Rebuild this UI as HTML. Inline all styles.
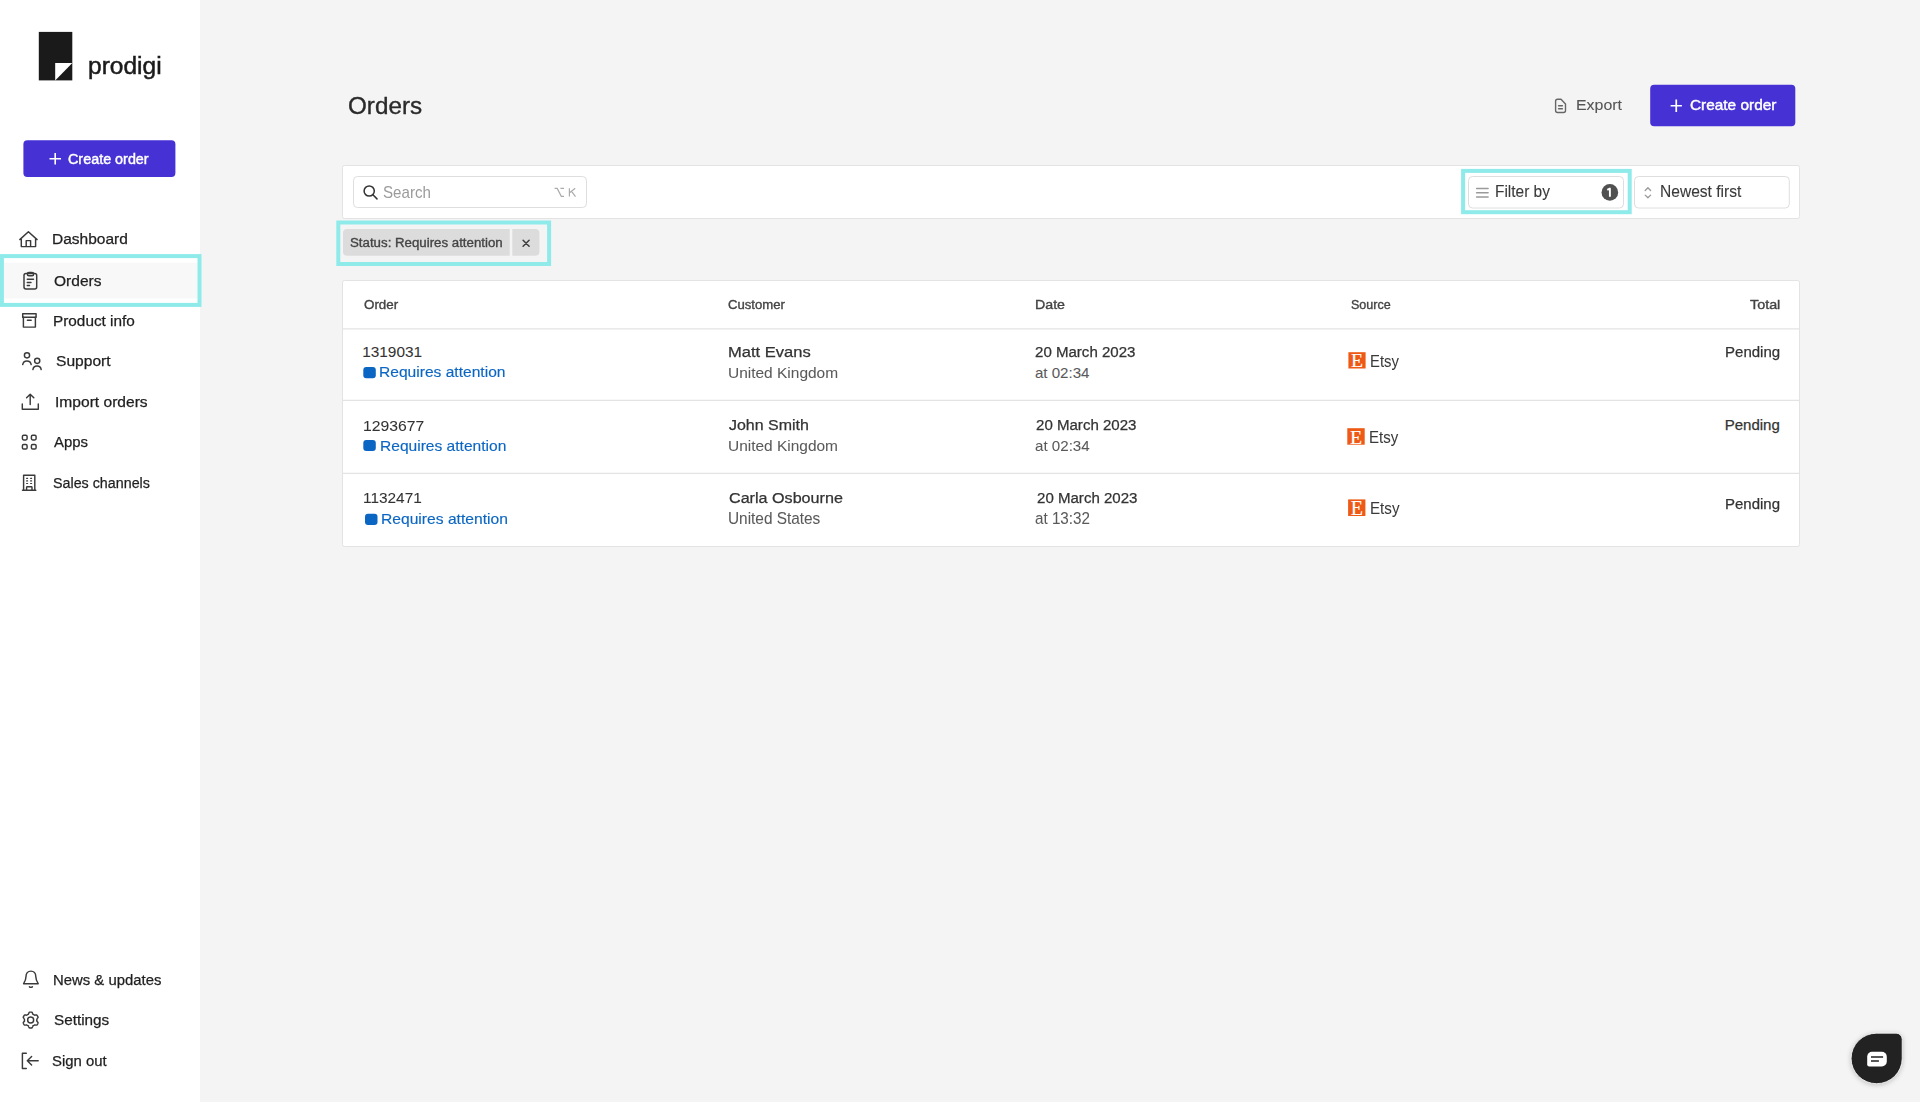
<!DOCTYPE html>
<html><head><meta charset="utf-8"><title>Orders</title>
<style>
html,body{margin:0;padding:0;width:1920px;height:1102px;overflow:hidden;background:#f4f4f4;font-family:"Liberation Sans",sans-serif;}
.sb{position:absolute;left:0;top:0;width:200px;height:1102px;background:#fff;}
.ov{position:absolute;left:0;top:0;}
.t{position:absolute;white-space:nowrap;transform-origin:0 0;font-family:"Liberation Sans",sans-serif;}
.etsy{position:absolute;color:#fff;text-align:center;font-family:"Liberation Serif",serif;font-weight:normal;-webkit-text-stroke:0.2px #fff;}
</style></head><body>
<div class="sb"></div>
<svg class="ov" width="1920" height="1102" viewBox="0 0 1920 1102">
<!-- logo -->
<rect x="38.8" y="31.9" width="33.5" height="48.5" fill="#1a1a1a"/>
<path d="M55.2 62.9 H72.3 L55.2 80.4 Z" fill="#ffffff"/>
<!-- sidebar create order -->
<rect x="23.4" y="140.2" width="152" height="36.7" rx="4" fill="#4631d4"/>
<path d="M55.2 153 V164.5 M49.5 158.8 H61" stroke="#fff" stroke-width="1.6" fill="none"/>
<!-- orders highlight -->
<rect x="3.8" y="262.7" width="193.6" height="35.7" fill="#f8f8f8"/>
<rect x="1.9" y="256.1" width="197.6" height="48.8" fill="none" stroke="#8feaea" stroke-width="4"/>
<g fill="none" stroke="#3a3a3a" stroke-width="1.45" stroke-linecap="round" stroke-linejoin="round">
 <!-- house -->
 <path d="M19.8 239.6 L28.4 231.8 L37.1 239.6 M21.3 238.3 V246.6 H35.6 V238.3 M26.2 246.6 V240.6 H30.6 V246.6"/>
 <!-- clipboard -->
 <rect x="24" y="273.4" width="12.7" height="15.6" rx="2"/>
 <rect x="27.4" y="272.4" width="6.2" height="3.4" rx="1.5"/>
 <path d="M27.3 279.3 H33.5 M27.3 282.4 H31 M27.3 285.5 H29.5"/>
 <!-- box -->
 <rect x="22.7" y="313.7" width="13.4" height="3.6"/>
 <path d="M23.4 317.3 V327.1 H35.4 V317.3 M27.4 320.3 H31.2"/>
 <!-- users -->
 <circle cx="27" cy="355.3" r="2.6"/>
 <path d="M22.7 364.6 A4.3 4.3 0 0 1 31.2 364.6"/>
 <circle cx="37.2" cy="360.8" r="2.6"/>
 <path d="M32.9 369.6 A4.2 4.2 0 0 1 41.2 369.6"/>
 <!-- upload -->
 <path d="M30.2 394.3 V404.5 M26.6 397.8 L30.2 394.2 L33.8 397.8 M22.3 404 V409.2 H38.3 V404"/>
 <!-- apps -->
 <rect x="22.4" y="435.3" width="4.7" height="4.6" rx="1.3"/>
 <rect x="31.4" y="435.3" width="4.7" height="4.6" rx="1.3"/>
 <rect x="22.4" y="444.4" width="4.7" height="4.6" rx="1.3"/>
 <rect x="31.4" y="444.4" width="4.7" height="4.6" rx="1.3"/>
 <!-- building -->
 <path d="M22.5 490.2 H35.8 M23.6 490.2 V475.3 H34.8 V490.2 M26.6 490 V487.5 Q26.6 486.8 27.3 486.8 H31.3 Q32 486.8 32 487.5 V490"/>
 <path d="M26.6 478.3 H27.6 M30.6 478.3 H31.6 M26.6 480.9 H27.6 M30.6 480.9 H31.6 M26.6 483.5 H27.6 M30.6 483.5 H31.6" stroke-width="1.2"/>
 <!-- bell -->
 <path d="M23.6 983.7 H38.2 M23.6 983.7 C25.3 981.2 26 979.2 26 976.6 C26 973.3 28.1 971.1 30.9 971.1 C33.7 971.1 35.8 973.3 35.8 976.6 C35.8 979.2 36.5 981.2 38.2 983.7 M29.4 986.7 C30.1 987.6 31.7 987.6 32.4 986.7"/>
 <!-- gear -->
 <path d="M36.90 1020.05 L36.90 1020.27 L36.88 1020.49 L36.87 1020.70 L36.84 1020.92 L36.85 1021.14 L37.11 1021.42 L37.38 1021.73 L37.64 1022.05 L37.88 1022.40 L38.08 1022.75 L38.02 1023.03 L37.91 1023.28 L37.80 1023.54 L37.67 1023.78 L37.53 1024.02 L37.39 1024.26 L37.24 1024.50 L37.08 1024.72 L36.91 1024.94 L36.71 1025.13 L36.30 1025.13 L35.88 1025.10 L35.46 1025.04 L35.07 1024.96 L34.69 1024.87 L34.50 1024.98 L34.32 1025.11 L34.14 1025.23 L33.96 1025.35 L33.77 1025.46 L33.58 1025.57 L33.39 1025.67 L33.19 1025.76 L32.99 1025.84 L32.80 1025.96 L32.69 1026.33 L32.56 1026.71 L32.41 1027.10 L32.23 1027.48 L32.02 1027.84 L31.76 1027.92 L31.48 1027.96 L31.20 1027.98 L30.93 1028.00 L30.65 1028.00 L30.37 1028.00 L30.10 1027.98 L29.82 1027.96 L29.54 1027.92 L29.28 1027.84 L29.07 1027.48 L28.89 1027.10 L28.74 1026.71 L28.61 1026.33 L28.50 1025.96 L28.31 1025.84 L28.11 1025.76 L27.91 1025.67 L27.72 1025.57 L27.52 1025.46 L27.34 1025.35 L27.16 1025.23 L26.98 1025.11 L26.80 1024.98 L26.61 1024.87 L26.23 1024.96 L25.84 1025.04 L25.42 1025.10 L25.00 1025.13 L24.59 1025.13 L24.39 1024.94 L24.22 1024.72 L24.06 1024.50 L23.91 1024.26 L23.77 1024.02 L23.63 1023.78 L23.50 1023.54 L23.39 1023.28 L23.28 1023.03 L23.22 1022.75 L23.42 1022.40 L23.66 1022.05 L23.92 1021.73 L24.19 1021.42 L24.45 1021.14 L24.46 1020.92 L24.43 1020.70 L24.42 1020.49 L24.40 1020.27 L24.40 1020.05 L24.40 1019.83 L24.42 1019.61 L24.43 1019.40 L24.46 1019.18 L24.45 1018.96 L24.19 1018.68 L23.92 1018.37 L23.66 1018.05 L23.42 1017.70 L23.22 1017.35 L23.28 1017.07 L23.39 1016.82 L23.50 1016.56 L23.63 1016.32 L23.77 1016.07 L23.91 1015.84 L24.06 1015.60 L24.22 1015.38 L24.39 1015.16 L24.59 1014.97 L25.00 1014.97 L25.42 1015.00 L25.84 1015.06 L26.23 1015.14 L26.61 1015.23 L26.80 1015.12 L26.98 1014.99 L27.16 1014.87 L27.34 1014.75 L27.52 1014.64 L27.72 1014.53 L27.91 1014.43 L28.11 1014.34 L28.31 1014.26 L28.50 1014.14 L28.61 1013.77 L28.74 1013.39 L28.89 1013.00 L29.07 1012.62 L29.28 1012.26 L29.54 1012.18 L29.82 1012.14 L30.10 1012.12 L30.37 1012.10 L30.65 1012.10 L30.93 1012.10 L31.20 1012.12 L31.48 1012.14 L31.76 1012.18 L32.02 1012.26 L32.23 1012.62 L32.41 1013.00 L32.56 1013.39 L32.69 1013.77 L32.80 1014.14 L32.99 1014.26 L33.19 1014.34 L33.39 1014.43 L33.58 1014.53 L33.77 1014.64 L33.96 1014.75 L34.14 1014.87 L34.32 1014.99 L34.50 1015.12 L34.69 1015.23 L35.07 1015.14 L35.46 1015.06 L35.88 1015.00 L36.30 1014.97 L36.71 1014.97 L36.91 1015.16 L37.08 1015.38 L37.24 1015.60 L37.39 1015.84 L37.53 1016.07 L37.67 1016.32 L37.80 1016.56 L37.91 1016.82 L38.02 1017.07 L38.08 1017.35 L37.88 1017.70 L37.64 1018.05 L37.38 1018.37 L37.11 1018.68 L36.85 1018.96 L36.84 1019.18 L36.87 1019.40 L36.88 1019.61 L36.90 1019.83 Z"/>
 <circle cx="30.65" cy="1020.05" r="3.0"/>
 <!-- sign out -->
 <path d="M26.3 1053.3 H22.4 V1068.5 H26.3 M38.2 1060.8 H27.3 M31.6 1056.6 L27.3 1060.8 L31.6 1065"/>
</g>
<!-- header export icon -->
<path d="M1557.6 99.3 H1561 L1565.5 103.9 V110.5 A2 2 0 0 1 1563.5 112.5 H1557.6 A2 2 0 0 1 1555.6 110.5 V101.3 A2 2 0 0 1 1557.6 99.3 Z M1558.6 105.8 H1562.4 M1558.6 108.8 H1562.4" fill="none" stroke="#666" stroke-width="1.4" stroke-linejoin="round" stroke-linecap="round"/>
<!-- header create order -->
<rect x="1650.2" y="84.7" width="145.1" height="41.6" rx="4" fill="#4631d4"/>
<path d="M1676.25 99.6 V111.9 M1670.6 105.75 H1681.9" stroke="#fff" stroke-width="1.7" fill="none"/>
<!-- toolbar -->
<rect x="342.5" y="165.5" width="1457" height="53" rx="2" fill="#fff" stroke="#e3e3e3" stroke-width="1"/>
<rect x="353.5" y="176.5" width="233" height="31" rx="4" fill="#fff" stroke="#dedede" stroke-width="1"/>
<g fill="none" stroke="#333" stroke-width="1.5" stroke-linecap="round">
 <circle cx="369.2" cy="191" r="5.1"/>
 <path d="M372.9 194.8 L377 198.9"/>
</g>
<path d="M554.6 188.4 H557.2 L561.3 196.3 H564 M560.4 188.4 H564 M569.4 188.2 V196.6 M575.2 188.2 L569.6 192.8 M571.6 191.4 L575.5 196.6" fill="none" stroke="#ababab" stroke-width="1.2"/>
<!-- filter -->
<rect x="1463.1" y="170.9" width="166.6" height="41.3" fill="none" stroke="#8feaea" stroke-width="4"/>
<rect x="1468.5" y="176.5" width="155" height="31.5" rx="4" fill="#fff" stroke="#dedede" stroke-width="1"/>
<path d="M1476.6 188.4 H1488.1 M1476.6 192.7 H1488.1 M1476.6 196.9 H1488.1" stroke="#9a9a9a" stroke-width="1.5" stroke-linecap="round"/>
<circle cx="1609.85" cy="192.4" r="8.3" fill="#505050"/>
<path d="M1607.3 189.9 L1609.9 188.6 V196.7" fill="none" stroke="#fff" stroke-width="1.9" stroke-linejoin="round"/>
<rect x="1634.5" y="176.5" width="154.8" height="31.5" rx="4" fill="#fff" stroke="#dedede" stroke-width="1"/>
<path d="M1645.2 190.5 L1647.9 187.8 L1650.6 190.5 M1645.2 195.1 L1647.9 197.8 L1650.6 195.1" fill="none" stroke="#999" stroke-width="1.3" stroke-linecap="round" stroke-linejoin="round"/>
<!-- chip -->
<rect x="338.3" y="222.5" width="210.8" height="41.5" fill="none" stroke="#8feaea" stroke-width="4"/>
<path d="M509.7 229.1 V255.7 H347 A4 4 0 0 1 343 251.7 V233.1 A4 4 0 0 1 347 229.1 Z" fill="#dcdcdc"/>
<path d="M512.3 229.1 H535.4 A4 4 0 0 1 539.4 233.1 V251.7 A4 4 0 0 1 535.4 255.7 H512.3 Z" fill="#dcdcdc"/>
<path d="M523.1 240.2 L529.1 246.2 M529.1 240.2 L523.1 246.2" stroke="#3f3f3f" stroke-width="1.55" stroke-linecap="round"/>
<!-- table -->
<rect x="342.5" y="280.5" width="1457" height="266" rx="2" fill="#fff" stroke="#e3e3e3" stroke-width="1"/>
<path d="M343 328.9 H1799 M343 400.4 H1799 M343 473.4 H1799" stroke="#e3e3e3" stroke-width="1.4"/>
<g fill="#0b66c3">
 <rect x="363.3" y="367.1" width="12.5" height="11.1" rx="3"/>
 <rect x="363.3" y="440.0" width="12.5" height="11.1" rx="3"/>
 <rect x="365.0" y="513.8" width="12.5" height="11.1" rx="3"/>
</g>
<g fill="#ee5a16">
 <rect x="1348.4" y="352.2" width="17.2" height="16.3"/>
 <rect x="1347.3" y="428.2" width="17.4" height="16.5"/>
 <rect x="1348.1" y="499.4" width="17.3" height="16.6"/>
</g>
<!-- chat bubble -->
<g>
 <path d="M1876.65 1033.2 H1896.2 A6 6 0 0 1 1902.2 1039.2 V1058.45 A25.55 25.25 0 1 1 1876.65 1033.2 Z" fill="#222" stroke="#fff" stroke-width="0.8" style="filter:drop-shadow(0 1.5px 2.5px rgba(0,0,0,0.22))"/>
 <path d="M1872 1051.8 H1881.8 A5 5 0 0 1 1886.8 1056.8 V1061.4 A5 5 0 0 1 1881.8 1066.4 H1869.2 A2 2 0 0 1 1867.2 1064.4 V1056.6 A4.8 4.8 0 0 1 1872 1051.8 Z" fill="#fff"/>
 <path d="M1871 1057.1 H1883.1 M1871 1061.1 H1878.9" stroke="#222" stroke-width="1.5"/>
</g>
</svg>
<div class="etsy" style="left:1348.4px;top:352.2px;width:17.2px;height:16.3px;font-size:19.6px;line-height:18.3px">E</div><div class="etsy" style="left:1347.3px;top:428.2px;width:17.4px;height:16.5px;font-size:19.8px;line-height:18.5px">E</div><div class="etsy" style="left:1348.1px;top:499.4px;width:17.3px;height:16.6px;font-size:19.9px;line-height:18.6px">E</div>
<div class="t" style="left:88.42px;top:53.92px;font-size:24.80px;line-height:24.80px;color:#1a1a1a;-webkit-text-stroke:0.50px #1a1a1a;transform:scaleX(0.9887);">prodigi</div><div class="t" style="left:67.57px;top:152.00px;font-size:14.75px;line-height:14.75px;color:#ffffff;-webkit-text-stroke:0.45px #ffffff;transform:scaleX(0.9739);">Create order</div><div class="t" style="left:51.91px;top:232.00px;font-size:14.75px;line-height:14.75px;color:#1f1f1f;-webkit-text-stroke:0.25px #1f1f1f;transform:scaleX(1.0518);">Dashboard</div><div class="t" style="left:54.08px;top:273.00px;font-size:15.38px;line-height:15.38px;color:#1f1f1f;-webkit-text-stroke:0.25px #1f1f1f;transform:scaleX(1.0115);">Orders</div><div class="t" style="left:53.33px;top:313.00px;font-size:15.00px;line-height:15.00px;color:#1f1f1f;-webkit-text-stroke:0.25px #1f1f1f;transform:scaleX(1.0223);">Product info</div><div class="t" style="left:55.53px;top:354.00px;font-size:14.12px;line-height:14.12px;color:#1f1f1f;-webkit-text-stroke:0.25px #1f1f1f;transform:scaleX(1.1047);">Support</div><div class="t" style="left:54.75px;top:395.00px;font-size:14.25px;line-height:14.25px;color:#1f1f1f;-webkit-text-stroke:0.25px #1f1f1f;transform:scaleX(1.0935);">Import orders</div><div class="t" style="left:54.35px;top:435.00px;font-size:14.25px;line-height:14.25px;color:#1f1f1f;-webkit-text-stroke:0.25px #1f1f1f;transform:scaleX(1.0464);">Apps</div><div class="t" style="left:53.32px;top:476.00px;font-size:14.62px;line-height:14.62px;color:#1f1f1f;-webkit-text-stroke:0.25px #1f1f1f;transform:scaleX(0.9779);">Sales channels</div><div class="t" style="left:53.36px;top:973.00px;font-size:14.75px;line-height:14.75px;color:#1f1f1f;-webkit-text-stroke:0.25px #1f1f1f;transform:scaleX(1.0089);">News &amp; updates</div><div class="t" style="left:53.94px;top:1013.00px;font-size:14.38px;line-height:14.38px;color:#1f1f1f;-webkit-text-stroke:0.25px #1f1f1f;transform:scaleX(1.0630);">Settings</div><div class="t" style="left:51.75px;top:1054.00px;font-size:14.12px;line-height:14.12px;color:#1f1f1f;-webkit-text-stroke:0.25px #1f1f1f;transform:scaleX(1.0561);">Sign out</div><div class="t" style="left:347.57px;top:94.00px;font-size:23.75px;line-height:23.75px;color:#2a2a2a;-webkit-text-stroke:0.35px #2a2a2a;transform:scaleX(1.0204);">Orders</div><div class="t" style="left:1576.03px;top:97.00px;font-size:15.50px;line-height:15.50px;color:#555555;-webkit-text-stroke:0.10px #555555;transform:scaleX(1.0263);">Export</div><div class="t" style="left:1689.94px;top:97.00px;font-size:15.12px;line-height:15.12px;color:#ffffff;-webkit-text-stroke:0.45px #ffffff;transform:scaleX(1.0183);">Create order</div><div class="t" style="left:383.44px;top:185.00px;font-size:15.75px;line-height:15.75px;color:#9b9b9b;transform:scaleX(0.9597);">Search</div><div class="t" style="left:1494.76px;top:183.00px;font-size:16.38px;line-height:16.38px;color:#3a3a3a;-webkit-text-stroke:0.10px #3a3a3a;transform:scaleX(0.9441);">Filter by</div><div class="t" style="left:1660.45px;top:183.00px;font-size:16.38px;line-height:16.38px;color:#3a3a3a;-webkit-text-stroke:0.10px #3a3a3a;transform:scaleX(0.9517);">Newest first</div><div class="t" style="left:350.00px;top:237.00px;font-size:12.50px;line-height:12.50px;color:#444444;-webkit-text-stroke:0.35px #444444;transform:scaleX(1.0618);">Status: Requires attention</div><div class="t" style="left:363.50px;top:299.00px;font-size:12.38px;line-height:12.38px;color:#444444;-webkit-text-stroke:0.35px #444444;transform:scaleX(1.0806);">Order</div><div class="t" style="left:728.08px;top:299.00px;font-size:12.38px;line-height:12.38px;color:#444444;-webkit-text-stroke:0.35px #444444;transform:scaleX(1.0605);">Customer</div><div class="t" style="left:1034.90px;top:299.00px;font-size:12.62px;line-height:12.62px;color:#444444;-webkit-text-stroke:0.35px #444444;transform:scaleX(1.1270);">Date</div><div class="t" style="left:1350.62px;top:299.00px;font-size:12.38px;line-height:12.38px;color:#444444;-webkit-text-stroke:0.35px #444444;transform:scaleX(1.0133);">Source</div><div class="t" style="left:1749.86px;top:298.00px;font-size:13.00px;line-height:13.00px;color:#444444;-webkit-text-stroke:0.35px #444444;transform:scaleX(1.1032);">Total</div><div class="t" style="left:362.22px;top:344.00px;font-size:15.38px;line-height:15.38px;color:#333333;-webkit-text-stroke:0.05px #333333;">1319031</div><div class="t" style="left:379.45px;top:365.00px;font-size:14.62px;line-height:14.62px;color:#0b66c3;-webkit-text-stroke:0.15px #0b66c3;transform:scaleX(1.0668);">Requires attention</div><div class="t" style="left:728.34px;top:345.00px;font-size:14.62px;line-height:14.62px;color:#333333;-webkit-text-stroke:0.25px #333333;transform:scaleX(1.1322);">Matt Evans</div><div class="t" style="left:727.92px;top:365.00px;font-size:15.38px;line-height:15.38px;color:#5a5a5a;-webkit-text-stroke:0.05px #5a5a5a;transform:scaleX(1.0064);">United Kingdom</div><div class="t" style="left:1035.30px;top:345.00px;font-size:14.38px;line-height:14.38px;color:#333333;-webkit-text-stroke:0.25px #333333;transform:scaleX(1.0477);">20 March 2023</div><div class="t" style="left:1034.89px;top:365.00px;font-size:15.12px;line-height:15.12px;color:#5a5a5a;-webkit-text-stroke:0.05px #5a5a5a;">at 02:34</div><div class="t" style="left:1370.11px;top:354.00px;font-size:16.00px;line-height:16.00px;color:#3a3a3a;-webkit-text-stroke:0.05px #3a3a3a;transform:scaleX(0.9274);">Etsy</div><div class="t" style="left:1724.75px;top:344.00px;font-size:15.12px;line-height:15.12px;color:#333333;-webkit-text-stroke:0.25px #333333;transform:scaleX(0.9945);">Pending</div><div class="t" style="left:362.90px;top:418.00px;font-size:15.38px;line-height:15.38px;color:#333333;-webkit-text-stroke:0.05px #333333;transform:scaleX(1.0238);">1293677</div><div class="t" style="left:379.65px;top:438.00px;font-size:15.12px;line-height:15.12px;color:#0b66c3;-webkit-text-stroke:0.15px #0b66c3;transform:scaleX(1.0298);">Requires attention</div><div class="t" style="left:729.30px;top:417.00px;font-size:15.00px;line-height:15.00px;color:#333333;-webkit-text-stroke:0.25px #333333;transform:scaleX(1.0640);">John Smith</div><div class="t" style="left:727.82px;top:438.00px;font-size:15.25px;line-height:15.25px;color:#5a5a5a;-webkit-text-stroke:0.05px #5a5a5a;transform:scaleX(1.0137);">United Kingdom</div><div class="t" style="left:1035.50px;top:418.00px;font-size:14.75px;line-height:14.75px;color:#333333;-webkit-text-stroke:0.25px #333333;transform:scaleX(1.0211);">20 March 2023</div><div class="t" style="left:1035.09px;top:438.00px;font-size:15.00px;line-height:15.00px;color:#5a5a5a;-webkit-text-stroke:0.05px #5a5a5a;transform:scaleX(1.0085);">at 02:34</div><div class="t" style="left:1369.00px;top:430.00px;font-size:15.75px;line-height:15.75px;color:#3a3a3a;-webkit-text-stroke:0.05px #3a3a3a;transform:scaleX(0.9524);">Etsy</div><div class="t" style="left:1724.75px;top:417.00px;font-size:15.00px;line-height:15.00px;color:#333333;-webkit-text-stroke:0.25px #333333;">Pending</div><div class="t" style="left:362.92px;top:491.00px;font-size:14.62px;line-height:14.62px;color:#333333;-webkit-text-stroke:0.05px #333333;transform:scaleX(1.0534);">1132471</div><div class="t" style="left:381.25px;top:511.00px;font-size:15.00px;line-height:15.00px;color:#0b66c3;-webkit-text-stroke:0.15px #0b66c3;transform:scaleX(1.0418);">Requires attention</div><div class="t" style="left:729.05px;top:491.00px;font-size:14.75px;line-height:14.75px;color:#333333;-webkit-text-stroke:0.25px #333333;transform:scaleX(1.0937);">Carla Osbourne</div><div class="t" style="left:727.82px;top:511.00px;font-size:15.75px;line-height:15.75px;color:#5a5a5a;-webkit-text-stroke:0.05px #5a5a5a;transform:scaleX(0.9761);">United States</div><div class="t" style="left:1037.10px;top:491.00px;font-size:14.75px;line-height:14.75px;color:#333333;-webkit-text-stroke:0.25px #333333;transform:scaleX(1.0211);">20 March 2023</div><div class="t" style="left:1035.09px;top:511.00px;font-size:15.75px;line-height:15.75px;color:#5a5a5a;-webkit-text-stroke:0.05px #5a5a5a;transform:scaleX(0.9659);">at 13:32</div><div class="t" style="left:1369.59px;top:501.00px;font-size:15.75px;line-height:15.75px;color:#3a3a3a;-webkit-text-stroke:0.05px #3a3a3a;transform:scaleX(0.9626);">Etsy</div><div class="t" style="left:1724.75px;top:497.00px;font-size:14.62px;line-height:14.62px;color:#333333;-webkit-text-stroke:0.25px #333333;transform:scaleX(1.0266);">Pending</div>
</body></html>
